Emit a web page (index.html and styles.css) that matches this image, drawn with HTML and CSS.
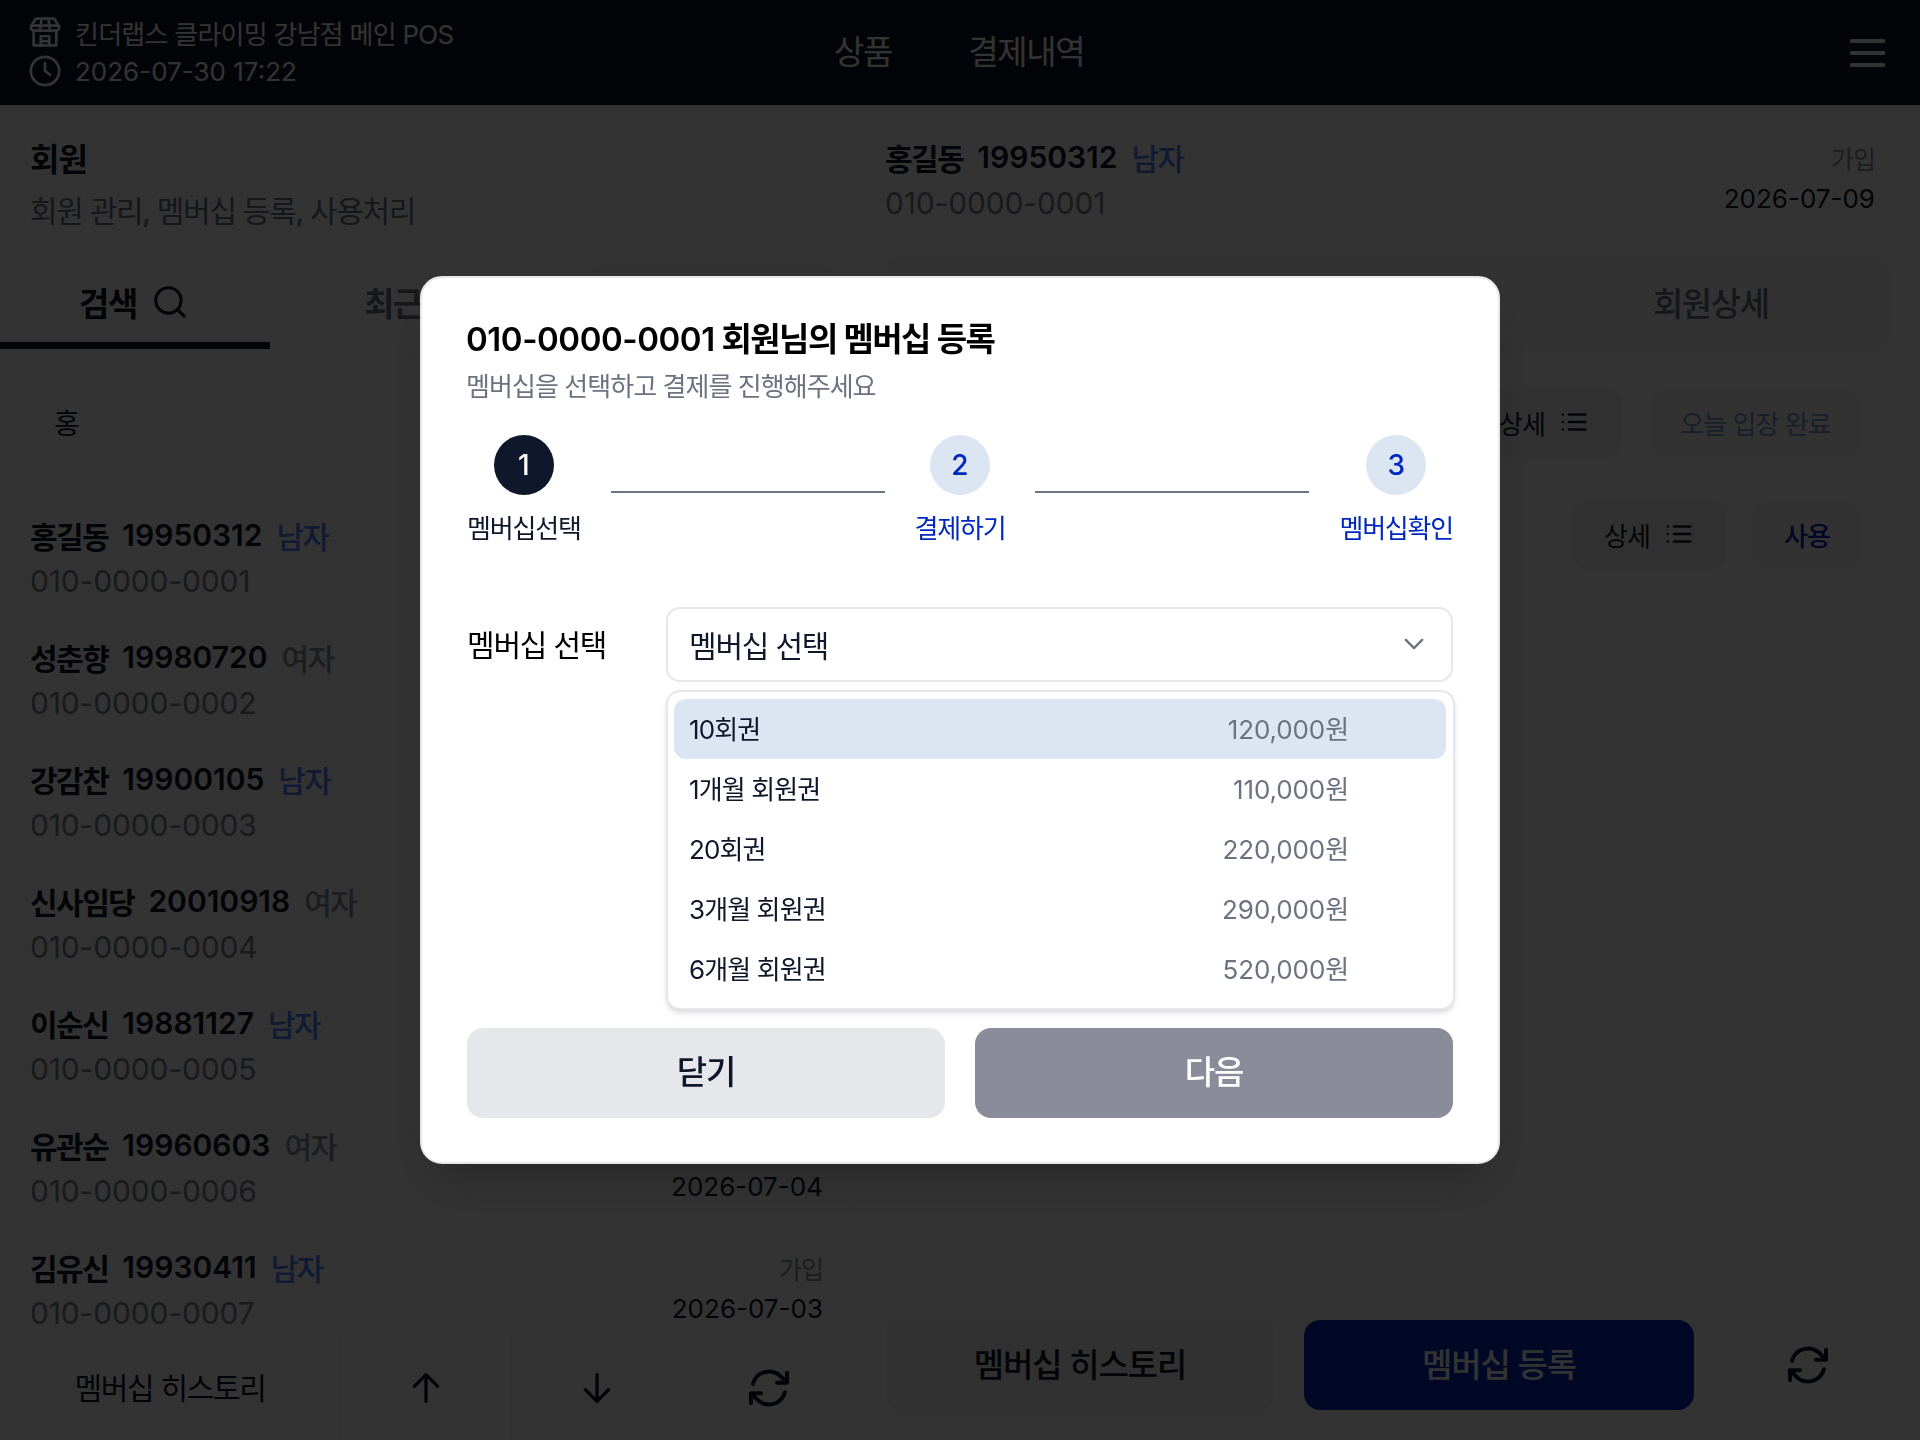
FILE: index.html
```html
<!DOCTYPE html>
<html lang="ko">
<head>
<meta charset="utf-8">
<title>멤버십 등록</title>
<link rel="stylesheet" href="styles.css">
</head>
<body>
<div class="app">
  <header class="topbar">
    <div class="store">
      <div class="store-line">
        <svg class="ico-head" viewBox="0 0 24 24"><path d="M5.500 2.500h13l3.500 6a2.500 2.500 0 0 1-2.500 2.500h-15A2.500 2.500 0 0 1 2 8.500z"/><path d="M2.500 7.500h19M9.500 3l-1 8M14.500 3l1 8"/><path d="M4 11v10.500h16V11"/><path d="M9 21.500V15h6v6.500M9 18.500h6"/></svg>
        <span>킨더랩스 클라이밍 강남점 메인 POS</span>
      </div>
      <div class="store-line time">
        <svg class="ico-head" viewBox="0 0 24 24"><circle cx="12" cy="12" r="10"/><path d="M12 6.500V12l3.500 2.500"/></svg>
        <span>2026-07-30 17:22</span>
      </div>
    </div>
    <nav class="topnav"><a>상품</a><a>결제내역</a></nav>
    <div class="burger"><i></i><i></i><i></i></div>
  </header>

  <main class="main">
    <section class="left">
      <div class="left-head">
        <h1>회원</h1>
        <p>회원 관리, 멤버십 등록, 사용처리</p>
      </div>
      <div class="left-tabs">
        <div class="ltab on"><span>검색</span>
          <svg class="ico-38" viewBox="0 0 24 24"><circle cx="11" cy="11" r="8"/><path d="M21 21l-4.300-4.300"/></svg>
        </div>
        <div class="ltab second"><span>최근회원</span></div>
        <div class="ltab third"></div>
      </div>
      <div class="search"><span>홍</span></div>
      <div class="list">
        <div class="item"><div><div class="who"><b>홍길동</b><b class="num">19950312</b><em class="m">남자</em></div><div class="tel">010-0000-0001</div></div></div>
        <div class="item"><div><div class="who"><b>성춘향</b><b class="num">19980720</b><em class="f">여자</em></div><div class="tel">010-0000-0002</div></div></div>
        <div class="item"><div><div class="who"><b>강감찬</b><b class="num">19900105</b><em class="m">남자</em></div><div class="tel">010-0000-0003</div></div></div>
        <div class="item"><div><div class="who"><b>신사임당</b><b class="num">20010918</b><em class="f">여자</em></div><div class="tel">010-0000-0004</div></div></div>
        <div class="item"><div><div class="who"><b>이순신</b><b class="num">19881127</b><em class="m">남자</em></div><div class="tel">010-0000-0005</div></div></div>
        <div class="item"><div><div class="who"><b>유관순</b><b class="num">19960603</b><em class="f">여자</em></div><div class="tel">010-0000-0006</div></div><div class="joined"><small>가입</small><time>2026-07-04</time></div></div>
        <div class="item"><div><div class="who"><b>김유신</b><b class="num">19930411</b><em class="m">남자</em></div><div class="tel">010-0000-0007</div></div><div class="joined"><small>가입</small><time>2026-07-03</time></div></div>
      </div>
      <div class="left-foot">
        <div class="cell label"><span>멤버십 히스토리</span></div>
        <div class="cell"><svg class="ico-40" viewBox="0 0 24 24"><path d="M12 20V4M5 11l7-7 7 7"/></svg></div>
        <div class="cell"><svg class="ico-40" viewBox="0 0 24 24"><path d="M12 4v16M5 13l7 7 7-7"/></svg></div>
        <div class="cell refresh"><svg class="ico-48" viewBox="0 0 24 24"><path d="M16.023 9.348h4.992M2.985 19.644v-4.992m0 0h4.992m-4.993 0 3.181 3.183a8.250 8.250 0 0 0 13.803-3.700M4.031 9.865a8.250 8.250 0 0 1 13.803-3.700l3.181 3.182m0-4.991v4.990"/></svg></div>
      </div>
    </section>

    <section class="right">
      <div class="right-head">
        <div><div class="who"><b>홍길동</b><b class="num">19950312</b><em class="m">남자</em></div><div class="tel">010-0000-0001</div></div>
        <div class="joined"><small>가입</small><time>2026-07-09</time></div>
      </div>
      <div class="right-tabs"><span></span><span></span><span>회원상세</span></div>
      <div class="row">
        <a class="btn grey"><span>상세</span><svg class="ico-30" viewBox="0 0 24 24"><path d="M8 6h13M8 12h13M8 18h13M3 6h.010M3 12h.010M3 18h.010"/></svg></a>
        <a class="btn done">오늘 입장 완료</a>
      </div>
      <div class="row second">
        <a class="btn grey"><span>상세</span><svg class="ico-30" viewBox="0 0 24 24"><path d="M8 6h13M8 12h13M8 18h13M3 6h.010M3 12h.010M3 18h.010"/></svg></a>
        <a class="btn use">사용</a>
      </div>
      <div class="right-foot">
        <a class="big hist">멤버십 히스토리</a>
        <a class="big reg">멤버십 등록</a>
        <div class="big-icon"><svg class="ico-48" viewBox="0 0 24 24"><path d="M16.023 9.348h4.992M2.985 19.644v-4.992m0 0h4.992m-4.993 0 3.181 3.183a8.250 8.250 0 0 0 13.803-3.700M4.031 9.865a8.250 8.250 0 0 1 13.803-3.700l3.181 3.182m0-4.991v4.990"/></svg></div>
      </div>
    </section>
  </main>
</div>

<div class="dim">
  <div class="modal">
    <h2><span class="digits">010-0000-0001</span> 회원님의 멤버십 등록</h2>
    <p class="sub">멤버십을 선택하고 결제를 진행해주세요</p>
    <div class="steps">
      <div class="step active"><span class="dot">1</span><span class="lab">멤버십선택</span></div>
      <div class="line"></div>
      <div class="step"><span class="dot">2</span><span class="lab">결제하기</span></div>
      <div class="line"></div>
      <div class="step"><span class="dot">3</span><span class="lab">멤버십확인</span></div>
    </div>
    <div class="field">
      <label>멤버십 선택</label>
      <div class="select-wrap">
        <div class="select"><span>멤버십 선택</span>
          <svg class="chev" viewBox="0 0 24 24"><path d="M5 8.500l7 7 7-7"/></svg>
        </div>
        <div class="menu">
          <div class="opt sel"><span>10회권</span><span class="price">120,000원</span></div>
          <div class="opt"><span>1개월 회원권</span><span class="price">110,000원</span></div>
          <div class="opt"><span>20회권</span><span class="price">220,000원</span></div>
          <div class="opt"><span>3개월 회원권</span><span class="price">290,000원</span></div>
          <div class="opt"><span>6개월 회원권</span><span class="price">520,000원</span></div>
        </div>
      </div>
    </div>
    <div class="actions">
      <a class="act close">닫기</a>
      <a class="act next">다음</a>
    </div>
  </div>
</div>
</body>
</html>
```

FILE: styles.css
```css
* { box-sizing: border-box; }
html, body { margin: 0; height: 100%; }
body {
  width: 1920px; height: 1440px; overflow: hidden; background: #fff; color: #0f172a;
  font-family: Inter, "Noto Sans CJK KR", sans-serif; font-size: 26px;
}
h1, h2, p { margin: 0; }
em { font-style: normal; }
svg { fill: none; stroke: currentColor; stroke-width: 2; stroke-linecap: round; stroke-linejoin: round; flex: none; display: block; }
.ico-head { width: 34px; height: 34px; margin-left: -2px; stroke-width: 1.900; }
.ico-30 { width: 30px; height: 30px; }
.ico-38 { width: 38px; height: 38px; }
.ico-40 { width: 40px; height: 40px; }
.ico-48 { width: 48px; height: 48px; }

.app { display: flex; flex-direction: column; height: 1440px; }
.topbar { height: 105px; background: #0f172a; color: #fff; display: flex; align-items: center; padding: 0 30px; position: relative; flex: none; }
.store { width: 804px; display: flex; flex-direction: column; gap: 9px; margin-bottom: 2px; }
.store-line { display: flex; align-items: center; gap: 13px; height: 30px; letter-spacing: -0.750px; }
.store-line.time { letter-spacing: 0; }
.topnav { display: flex; gap: 76px; font-size: 33px; letter-spacing: -1.300px; padding-bottom: 6px; }
.burger { margin-left: auto; margin-right: 5px; width: 35px; display: flex; flex-direction: column; gap: 8px; }
.burger i { display: block; height: 4px; border-radius: 1px; background: #fff; }

.main { flex: 1; display: flex; min-height: 0; }
.left { width: 855px; border-right: 1px solid #f3f4f6; display: flex; flex-direction: column; flex: none; }
.left-head { padding: 35px 30px 0; height: 159px; }
.left-head h1 { font-size: 32px; line-height: 40px; font-weight: 700; letter-spacing: -1px; }
.left-head p { font-size: 30px; line-height: 36px; margin-top: 13px; color: #6b7280; letter-spacing: -1.300px; }
.left-tabs { height: 85px; display: flex; }
.ltab { width: 270px; padding-bottom: 10px; display: flex; align-items: center; justify-content: center; gap: 14px; font-size: 33px; font-weight: 600; letter-spacing: -1.400px; color: #6b7280; }
.ltab.on { color: #0f172a; border-bottom: 7px solid #0f172a; padding-bottom: 3px; padding-right: 2px; }
.ltab.second { width: 296px; justify-content: flex-start; padding-left: 94px; }
.ltab.third { width: 248px; margin-left: 22px; background: #f9fafb; border-radius: 18px 18px 0 0; }
.search { height: 148px; padding-left: 54px; padding-bottom: 2px; display: flex; align-items: center; font-size: 28px; }
.list { flex: 1; min-height: 0; overflow: hidden; }
.item { height: 122px; padding: 18px 31px 0 30px; display: flex; justify-content: space-between; }
.who { display: flex; align-items: center; gap: 14px; height: 40px; font-size: 30px; letter-spacing: -1.500px; }
.who b { font-weight: 600; }
.who .num { letter-spacing: 0; }
.who em { font-weight: 500; }
.m { color: #5082ff; }
.f { color: #8b9099; }
.tel { height: 40px; line-height: 40px; margin-top: 6px; font-size: 30px; color: #7d828c; letter-spacing: -0.150px; }
.joined { display: flex; flex-direction: column; align-items: flex-end; padding-top: 3px; }
.joined small { font-size: 25px; line-height: 40px; color: #8b9099; letter-spacing: -1px; }
.joined time { font-size: 26px; line-height: 38px; color: #111827; letter-spacing: 0; }
.left-foot { height: 105px; flex: none; display: grid; grid-template-columns: 340px 171px 170px 1fr; }
.cell { display: flex; align-items: center; justify-content: center; border-left: 1px solid #f3f4f6; font-size: 30px; letter-spacing: -1.300px; }
.cell.label { border-left: 0; padding-bottom: 4px; }
.cell.refresh { padding-left: 2px; }

.right { flex: 1; padding: 32px 30px 30px; display: flex; flex-direction: column; min-width: 0; }
.right-head { display: flex; justify-content: space-between; padding-right: 15px; height: 86px; }
.right-head .joined { padding-top: 3px; }
.right-tabs { margin-top: 32px; height: 98px; background: #f9fafb; border-radius: 20px; display: grid; grid-template-columns: repeat(3, 1fr); padding-right: 14px; padding-bottom: 4px; align-items: center; justify-items: center; font-size: 33px; letter-spacing: -1.400px; color: #6b7280; font-weight: 500; }
.row { display: flex; justify-content: flex-end; gap: 29px; margin-top: 36px; padding-right: 29px; }
.row.second { margin-top: 44px; gap: 27px; }
.btn { height: 68px; padding-bottom: 2px; border-radius: 16px; display: flex; align-items: center; justify-content: center; gap: 14px; font-size: 26px; letter-spacing: -0.950px; background: #f3f4f6; }
.btn.grey { width: 154px; color: #111827; }
.btn.done { width: 211px; color: #7a94d0; background: #f9fafb; }
.btn.use { width: 108px; color: #0028be; font-weight: 500; background: #f9fafb; }
.right-foot { margin-top: auto; display: grid; grid-template-columns: 390px 390px 1fr; gap: 29px; }
.big { height: 90px; padding-bottom: 5px; border-radius: 16px; display: flex; align-items: center; justify-content: center; font-size: 33px; letter-spacing: -1.100px; font-weight: 500; }
.big-icon { height: 90px; display: flex; align-items: center; justify-content: center; padding-left: 2px; }
.hist { background: #f3f4f6; }
.reg { background: #0028be; color: #fff; }

.dim { position: fixed; inset: 0; background: rgba(0,0,0,.8); display: flex; align-items: center; justify-content: center; }
.modal { width: 1080px; height: 888px; background: #fff; border: 2px solid #e5e7eb; border-radius: 22px; padding: 41px 45px 0; box-shadow: 0 25px 50px -12px rgba(0,0,0,.25); }
.modal h2 { font-size: 33px; line-height: 40px; font-weight: 600; color: #000; letter-spacing: -1.550px; margin-left: -1px; }
.digits { letter-spacing: -0.450px; }
.sub { font-size: 26px; line-height: 34px; margin-top: 11px; margin-left: -1px; color: #6b7280; letter-spacing: -0.950px; }
.steps { display: flex; gap: 30px; margin-top: 31px; }
.step { display: flex; flex-direction: column; align-items: center; flex: none; }
.dot { width: 60px; height: 60px; border-radius: 50%; background: #dce6f2; color: #0028be; display: flex; align-items: center; justify-content: center; font-size: 28px; font-weight: 500; }
.lab { margin-top: 16px; font-size: 26px; line-height: 36px; color: #0028be; letter-spacing: -1.200px; }
.step.active .dot { background: #0f172a; color: #fff; }
.step.active .lab { color: #0f172a; }
.line { flex: 1; height: 2px; margin-top: 56px; background: #6b7280; }
.field { display: flex; margin-top: 60px; }
.field label { width: 199px; flex: none; line-height: 77px; font-size: 30px; letter-spacing: -1.200px; color: #000; }
.select-wrap { flex: 1; position: relative; }
.select { height: 75px; border: 2px solid #e5e7eb; border-radius: 14px; display: flex; align-items: center; justify-content: space-between; padding: 0 23px 2px 21px; font-size: 30px; letter-spacing: -1.200px; color: #0f172a; }
.chev { width: 28px; height: 28px; color: #6b7280; }
.menu { position: absolute; left: 0; top: 83px; width: 789px; height: 320px; background: #fff; border: 2px solid #e5e7eb; border-radius: 14px; padding: 7px 7px 7px 6px; box-shadow: 0 4px 6px -1px rgba(0,0,0,.12), 0 2px 4px -2px rgba(0,0,0,.1); }
.opt { height: 60px; border-radius: 12px; display: flex; align-items: center; justify-content: space-between; padding: 0 97px 3px 15px; font-size: 26px; letter-spacing: -0.900px; color: #0f172a; }
.opt.sel { background: #dce6f2; }
.price { color: #6b7280; letter-spacing: -0.100px; }
.actions { display: grid; grid-template-columns: 1fr 1fr; gap: 30px; margin-top: 344px; }
.act { height: 90px; padding-bottom: 6px; border-radius: 16px; display: flex; align-items: center; justify-content: center; font-size: 33px; font-weight: 500; letter-spacing: -1px; }
.close { background: #e6e7ea; color: #0f172a; }
.next { background: #8a8d99; color: #fff; }
```
